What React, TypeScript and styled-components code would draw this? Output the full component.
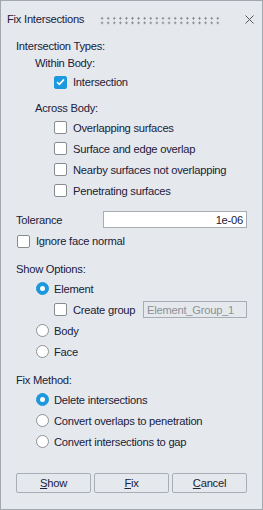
import React from "react";
import styled, { createGlobalStyle } from "styled-components";

const Global = createGlobalStyle`
  html, body { margin: 0; padding: 0; background: #e5e9ed; }
  body {
    font-family: "Liberation Sans", Arial, sans-serif;
    font-size: 11.2px;
    letter-spacing: -0.25px;
    color: #20203a;
  }
  * { box-sizing: border-box; }
`;

const Window = styled.div`
  width: 263px;
  height: 510px;
  border: 1px solid #a2a8ad;
  background: #e5e9ed;
  display: flex;
  flex-direction: column;
`;

const TitleBar = styled.div`
  height: 36px;
  display: flex;
  align-items: center;
  padding: 0 8px 0 6px;
  gap: 15px;
`;

const Title = styled.div`
  white-space: nowrap;
`;

const Grip = styled.div`
  flex: 1;
  height: 9px;
  margin-top: 3px;
  background-image: radial-gradient(circle, #868a8e 1.1px, transparent 1.25px);
  background-size: 6.1px 4.6px;
`;

const Close = styled.svg`
  width: 9px;
  height: 9px;
  margin-left: 9px;
`;

const Body = styled.div`
  flex: 1;
  display: flex;
  flex-direction: column;
  padding: 1px 15px 0 15px;
`;

const SectionLabel = styled.div<{ $indent?: number; $top?: number }>`
  height: 17px;
  line-height: 17px;
  padding-left: ${(p) => p.$indent ?? 0}px;
  margin-top: ${(p) => p.$top ?? 0}px;
  white-space: nowrap;
`;

const Row = styled.div<{ $indent?: number; $h?: number; $top?: number }>`
  height: ${(p) => p.$h ?? 21}px;
  margin-top: ${(p) => p.$top ?? 0}px;
  padding-left: ${(p) => p.$indent ?? 0}px;
  display: flex;
  align-items: center;
  white-space: nowrap;
`;

const Box = styled.span<{ $on?: boolean }>`
  width: 13px;
  height: 13px;
  flex: none;
  border: 1px solid ${(p) => (p.$on ? "#1c98de" : "#878c91")};
  background: ${(p) => (p.$on ? "#1c98de" : "#ffffff")};
  border-radius: 2px;
  margin-right: 6px;
  display: flex;
  align-items: center;
  justify-content: center;
`;

const Radio = styled.span<{ $on?: boolean }>`
  width: 13px;
  height: 13px;
  flex: none;
  border-radius: 50%;
  border: 1px solid ${(p) => (p.$on ? "#1c98de" : "#8d9297")};
  background: ${(p) => (p.$on ? "#1c98de" : "#ffffff")};
  margin-right: 5px;
  display: flex;
  align-items: center;
  justify-content: center;
  &::after {
    content: "";
    display: ${(p) => (p.$on ? "block" : "none")};
    width: 5px;
    height: 5px;
    border-radius: 50%;
    background: #ffffff;
  }
`;

const Field = styled.div<{ $left: number; $disabled?: boolean }>`
  margin-left: auto;
  width: ${(p) => 247 - p.$left}px;
  height: 17px;
  border: 1px solid #a7adb2;
  background: ${(p) => (p.$disabled ? "#e5e9ed" : "#ffffff")};
  color: ${(p) => (p.$disabled ? "#8c9196" : "#20203a")};
  padding: 0 3px;
  display: flex;
  align-items: center;
  justify-content: ${(p) => (p.$disabled ? "flex-start" : "flex-end")};
`;

const Buttons = styled.div`
  margin-top: 21px;
  display: grid;
  grid-template-columns: repeat(3, 75px);
  gap: 3px;
`;

const Button = styled.div`
  height: 20px;
  border: 1px solid #a8aeb3;
  border-radius: 2px;
  background: #e5e9ed;
  display: flex;
  align-items: center;
  justify-content: center;
`;

const Check = () => (
  <svg width="9" height="8" viewBox="0 0 9 8">
    <path d="M1 4.2 L3.4 6.4 L8 1.4" fill="none" stroke="#fff" strokeWidth="1.6" />
  </svg>
);

const CheckRow = ({ label, on, indent }: { label: string; on?: boolean; indent: number }) => (
  <Row $indent={indent}>
    <Box $on={on}>{on && <Check />}</Box>
    {label}
  </Row>
);

const RadioRow = ({ label, on }: { label: string; on?: boolean }) => (
  <Row $indent={20}>
    <Radio $on={on} />
    {label}
  </Row>
);

export default function App() {
  return (
    <>
      <Global />
      <Window>
        <TitleBar>
          <Title>Fix Intersections</Title>
          <Grip />
          <Close viewBox="0 0 9 9">
            <path d="M0.5 0.5 L8.5 8.5 M8.5 0.5 L0.5 8.5" stroke="#55595d" strokeWidth="1" />
          </Close>
        </TitleBar>
        <Body>
          <SectionLabel>Intersection Types:</SectionLabel>
          <SectionLabel $indent={19}>Within Body:</SectionLabel>
          <Row $indent={38} $h={20}>
            <Box $on>
              <Check />
            </Box>
            Intersection
          </Row>
          <SectionLabel $indent={19} $top={8}>Across Body:</SectionLabel>
          <CheckRow indent={38} label="Overlapping surfaces" />
          <CheckRow indent={38} label="Surface and edge overlap" />
          <CheckRow indent={38} label="Nearby surfaces not overlapping" />
          <CheckRow indent={38} label="Penetrating surfaces" />
          <Row $h={17} $top={10}>
            Tolerance
            <Field $left={103}>1e-06</Field>
          </Row>
          <Row $h={20} $top={3} $indent={1}>
            <Box />
            Ignore face normal
          </Row>
          <SectionLabel $top={10}>Show Options:</SectionLabel>
          <RadioRow on label="Element" />
          <Row $indent={38}>
            <Box />
            Create group
            <Field $left={143} $disabled>
              Element_Group_1
            </Field>
          </Row>
          <RadioRow label="Body" />
          <RadioRow label="Face" />
          <SectionLabel $top={10}>Fix Method:</SectionLabel>
          <RadioRow on label="Delete intersections" />
          <RadioRow label="Convert overlaps to penetration" />
          <RadioRow label="Convert intersections to gap" />
          <Buttons>
            <Button>
              <span>
                <u>S</u>how
              </span>
            </Button>
            <Button>
              <span>
                <u>F</u>ix
              </span>
            </Button>
            <Button>
              <span>
                <u>C</u>ancel
              </span>
            </Button>
          </Buttons>
        </Body>
      </Window>
    </>
  );
}
